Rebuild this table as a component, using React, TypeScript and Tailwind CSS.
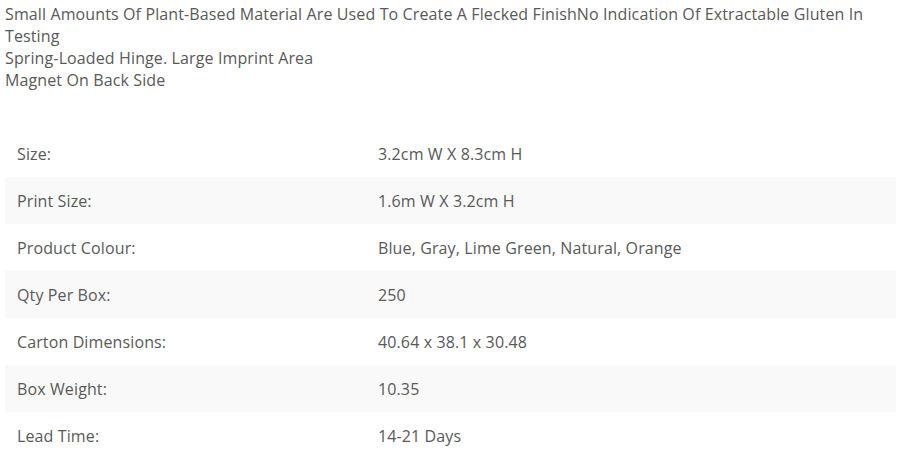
const specs: [string, string][] = [
  ['Size:', '3.2cm W X 8.3cm H'],
  ['Print Size:', '1.6m W X 3.2cm H'],
  ['Product Colour:', 'Blue, Gray, Lime Green, Natural, Orange'],
  ['Qty Per Box:', '250'],
  ['Carton Dimensions:', '40.64 x 38.1 x 30.48'],
  ['Box Weight:', '10.35'],
  ['Lead Time:', '14-21 Days'],
];

export default function App() {
  return (
    <div
      className="bg-white w-[908px] h-[456px] overflow-hidden text-base leading-[22px] tracking-[0.12px] text-[#595959]"
      style={{ fontFamily: '"Open Sans", sans-serif' }}
    >
      <div className="ml-[5px] w-[891px] pt-[3px]">
        {/* Description */}
        <div>
          <p>
            Small Amounts Of Plant-Based Material Are Used To Create A Flecked FinishNo Indication Of Extractable Gluten In
            Testing
          </p>
          <p>Spring-Loaded Hinge. Large Imprint Area</p>
          <p>Magnet On Back Side</p>
        </div>

        {/* Spec table */}
        <div className="mt-[39px]">
          {specs.map(([label, value], i) => (
            <div
              key={label}
              className={`flex items-center h-[47px] ${i % 2 === 1 ? 'bg-[#f9f9f9]' : ''}`}
            >
              <div className="w-[361px] pl-3">{label}</div>
              <div className="flex-1 pl-3">{value}</div>
            </div>
          ))}
        </div>
      </div>
    </div>
  );
}
